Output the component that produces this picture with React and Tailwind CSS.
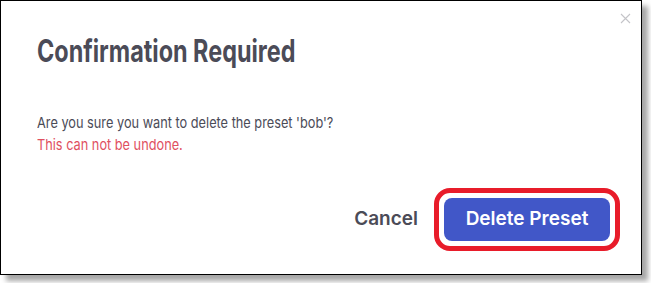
import React from "react";

const CloseIcon = () => (
  <svg width="11" height="11" viewBox="0 0 11 11" fill="none">
    <path d="M1 1L10 10M10 1L1 10" stroke="#c4c4c8" strokeWidth="1.1" />
  </svg>
);

const App = () => {
  return (
    <div className="w-[651px] h-[283px] bg-white" style={{ fontFamily: "Inter, 'Noto Sans', sans-serif" }}>
      <div className="w-[642px] h-[275px] bg-white border-[1.5px] border-black shadow-[6px_6px_5px_rgba(0,0,0,0.35)] flex flex-col">
        <div className="flex justify-end pr-[10px] pt-[12px] h-[24px]">
          <CloseIcon />
        </div>
        <div className="pl-[36px] mt-[8px] h-[36px]">
          <h1 className="inline-block origin-left scale-x-[0.755] text-[31px] leading-[36px] font-bold text-[#4b4b57] whitespace-nowrap">
            Confirmation Required
          </h1>
        </div>
        <div className="pl-[36px] mt-[43px] text-[15px] leading-[22px]">
          <p className="inline-block origin-left scale-x-[0.85] text-[#4b4b57] whitespace-nowrap">
            Are you sure you want to delete the preset 'bob'?
          </p>
          <p className="block origin-left scale-x-[0.85] text-[#e0505f] whitespace-nowrap">This can not be undone.</p>
        </div>
        <div className="flex justify-end items-center gap-[16px] pr-[21px] mt-[32px]">
          <button className="text-[19px] font-semibold text-[#4b4b57]">Cancel</button>
          <div className="p-[5px] rounded-[16px] border-[5px] border-[#e81c2a]">
            <button className="w-[166px] h-[43px] rounded-[8px] bg-[#4157c8] text-white text-[19px] font-semibold">
              Delete Preset
            </button>
          </div>
        </div>
      </div>
    </div>
  );
};

export default App;
